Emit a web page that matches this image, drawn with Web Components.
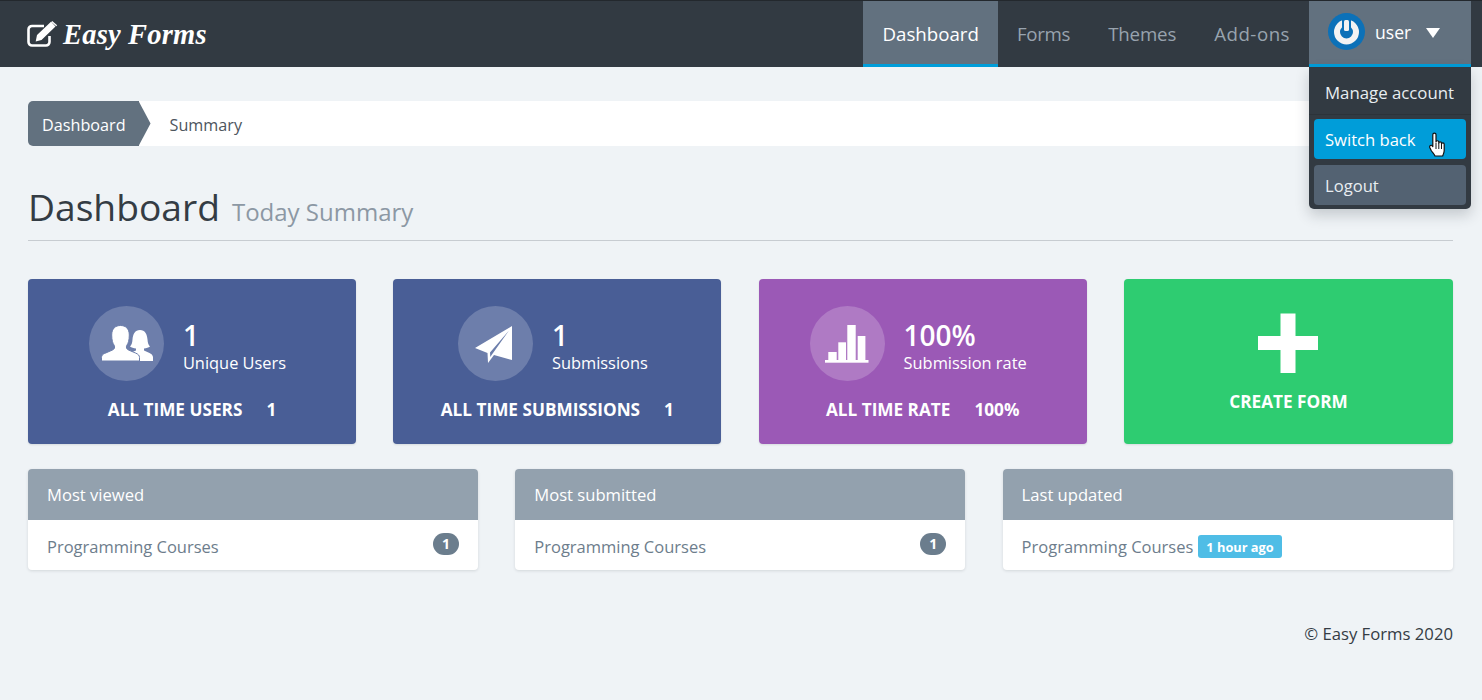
<!DOCTYPE html>
<html lang="en"><head><meta charset="utf-8"><title>Easy Forms</title>
<style>
html,body{margin:0;padding:0;background:#eff3f6;height:700px;overflow:hidden}
body{font-family:"Open Sans",sans-serif;font-size:17px;color:#343c44}
</style></head><body>
<ef-app></ef-app>
<script>
const def=(name,html,init)=>{customElements.define(name,class extends HTMLElement{
  connectedCallback(){ if(this.shadowRoot)return; const r=this.attachShadow({mode:'open'}); r.innerHTML=typeof html==='function'?html(this):html; init&&init(this,r);}
});};
const ICONS={
users:`<svg width="52" height="36" viewBox="0 0 52 36" style="margin-left:1px;margin-top:-1px"><path fill="#fff" d="M52 36v-4c-.3-2-1.700-3.300-3.500-4l-5.500-2.500v-2c2.500-.3 4.500-1 6-2-1.500-1.500-2.300-3.500-2.500-7C46 9 44 5 39 5s-7 4-7.500 9.500c-.2 3.500-1 5.500-2.500 7 1.500 1 3.500 1.700 6 2v2L29 28v8z"/><path fill="#fff" stroke="#6c7eab" stroke-width="1" d="M.5 36v-3.500c0-2 1-3.200 3-4l8-3.500c2-1 2.500-2.500 1.800-4.500C11.700 18.500 10.700 15 10.700 10 10.700 3.500 14.500.5 19.500.5S28.300 3.500 28.300 10c0 5-1 8.500-2.600 10.500-.7 2-.2 3.500 1.800 4.500l7 3c2.800 1.200 4 2.500 4 4.500V36z"/></svg>`,
plane:`<svg width="37" height="37" viewBox="0 0 37 37" style="margin-left:-3px;margin-top:1px"><path fill="#fff" d="M37 0 0 22l12.500 5L13 37l6-8 18 5z"/><path fill="#6c7eab" d="M34 4.500 15 26.500l.3 4.500 2.200-3.200z"/></svg>`,
bars:`<svg width="44" height="38" viewBox="0 0 44 38"><g fill="#fff"><rect x="3.300" y="27" width="8.400" height="8"/><rect x="13.300" y="17.300" width="7.700" height="18"/><rect x="22.300" y="0" width="8.400" height="35"/><rect x="32.700" y="11" width="7.700" height="24"/><rect x="0" y="35" width="43.500" height="2.700"/></g></svg>`
};

def('ef-nav-item',`<style>
:host{display:flex;align-items:center;height:66px;padding:0 19px 0;box-sizing:border-box;color:#98a3ae;font-size:18.700px;border-bottom:3px solid transparent;white-space:nowrap}
:host([active]){background:#62717f;color:#fff;border-bottom-color:#009dd9}
div{padding-top:2px}
</style><div><slot></slot></div>`);

def('ef-user-menu',`<style>
:host{display:block;position:relative;width:162px;height:66px;margin-right:11px}
.top{height:66px;box-sizing:border-box;background:#62717f;border-bottom:3px solid #009dd9;color:#fff;font-size:17.600px;display:flex;align-items:center;padding:0 0 0 19px;gap:9px}
.top span{margin-top:-1px}
.av{flex:none;margin-top:-1px}
.caret{width:0;height:0;border-left:7.500px solid transparent;border-right:7.500px solid transparent;border-top:10px solid #fff;margin:0 0 0 6px}
.menu{position:absolute;left:0;right:0;top:66px;background:#323a42;border-radius:0 0 5px 5px;box-shadow:0 6px 14px rgba(40,50,60,.22);padding:0 5px 3px;box-sizing:border-box;height:142px;z-index:5;font-size:16.600px}
.m{display:flex;align-items:center;padding:0 11px;box-sizing:border-box;height:40px;border-radius:4px;color:#e8edf1;white-space:nowrap}
.first{margin:0 -5px 4px;padding:4px 16px 0;border-bottom:1px solid #2c3339;height:48px;border-radius:0;font-size:16.800px}
.on{background:#009dd9;color:#fff;position:relative;margin-bottom:6px}
.off{background:#536272;color:#e8edf1}
.hand{position:absolute;left:115px;top:13px}
</style>
<div class="top"><svg class="av" width="38" height="38" viewBox="0 0 38 38"><circle cx="18.500" cy="18.500" r="18.500" fill="#0c71b8"/><circle cx="18.500" cy="19" r="9.500" fill="none" stroke="#f3f3f3" stroke-width="6"/><rect x="14" y="4" width="9" height="14" fill="#0c71b8"/><rect x="16" y="7" width="5" height="11" rx="1.500" fill="#f3f3f3"/></svg><span>user</span><i class="caret"></i></div>
<div class="menu"><div class="m first">Manage account</div><div class="m on">Switch back
<svg class="hand" width="17" height="26" viewBox="0 0 17 26"><path fill="#fff" stroke="#111" stroke-width="1.200" stroke-linejoin="round" d="M3.800 14.500V2.800c0-2.200 3.200-2.200 3.200 0V10c0-1.700 2.800-1.700 2.800 0v1c0-1.600 2.700-1.600 2.700 0v1c0-1.500 2.700-1.500 2.700.2v6.300c0 2.500-1 3.500-1.500 5.500H6c-.8-2-2.500-3.500-3.800-5.500L.8 15.500c-.7-1.800 1.500-3 2.300-1.700z"/><path stroke="#111" fill="none" d="M7 11v6M9.800 11v6M12.500 12v5"/></svg></div><div class="m off">Logout</div></div>`);

def('ef-navbar',`<style>
:host{display:flex;height:67px;box-sizing:border-box;background:#323a42;border-top:1px solid #23282d;align-items:stretch;position:relative;z-index:3}
.brand{display:flex;align-items:center;gap:5px;padding-left:27px;color:#fff;flex:1}
.name{font:italic 700 28.500px "Liberation Serif",serif;letter-spacing:.2px;padding-top:2px}
svg{flex:none}
</style>
<div class="brand"><svg width="31" height="27" viewBox="0 0 31 27"><path fill="none" stroke="#fff" stroke-width="2.600" d="M22.500 15v6a3.500 3.500 0 0 1-3.500 3.500H5A3.500 3.500 0 0 1 1.500 21V8.500A3.500 3.500 0 0 1 5 5h12"/><path fill="#fff" d="M10 14 24 .8l4.500 4.700L14.500 19l-5.800 1.500zM25.200 0l5 4.300-1 1-4.800-4.400z"/></svg><span class="name">Easy Forms</span></div>
<slot></slot>`);

def('ef-breadcrumb',`<style>
:host{display:flex;height:45px;background:#fff;border-radius:5px 0 0 5px;align-items:center;font-size:16.200px;color:#4d555d}
.a{position:relative;background:#62717f;color:#fff;height:45px;display:flex;align-items:center;padding:0 13px 0 14px;border-radius:5px 0 0 5px;margin-right:31px}
.a::after{content:"";position:absolute;left:100%;top:0;width:12px;height:45px;background:#62717f;clip-path:polygon(0 0,100% 50%,0 100%)}
.t{padding-top:2px}
</style><div class="a"><span class="t"><slot name="root"></slot></span></div><span class="t"><slot></slot></span>`);

def('ef-page-title',`<style>
:host{display:block;margin-top:39px;height:55px;border-bottom:1px solid #c7ccd1}
h1{margin:0;font-weight:400;font-size:37.200px;line-height:44px;color:#343c44;display:flex;align-items:baseline;gap:12px}
small{font-size:24px;color:#8c98a4}
</style><h1><slot></slot><small><slot name="sub"></slot></small></h1>`);

def('ef-stat-card',(el)=>`<style>
:host{display:flex;flex-direction:column;align-items:center;height:165px;box-sizing:border-box;background:${el.getAttribute('color')||'#495e96'};border-radius:4px;box-shadow:0 1px 2px rgba(40,50,60,.12);color:#fff;padding-top:27px}
.top{display:flex;align-items:center;gap:19px;height:75px;padding-right:9px}
.ic{width:75px;height:75px;border-radius:50%;background:rgba(255,255,255,.2);display:flex;align-items:center;justify-content:center}
.t{display:flex;flex-direction:column;padding-top:4px}
b{font-weight:600;font-size:28px;line-height:34px;height:34px;margin-top:1px}
span{font-size:16.400px;line-height:22px;height:22px}
.bot{display:flex;gap:24px;font-weight:700;font-size:17.200px;margin-top:17px;line-height:24px}
</style><div class="top"><div class="ic">${ICONS[el.getAttribute('icon')]}</div><div class="t"><b>${el.getAttribute('value')}</b><span>${el.getAttribute('label')}</span></div></div>
<div class="bot"><em style="all:unset">${el.getAttribute('total-label')}</em><em style="all:unset">${el.getAttribute('total')}</em></div>`);

def('ef-create-card',`<style>
:host{display:flex;flex-direction:column;align-items:center;height:165px;box-sizing:border-box;background:#2ecc71;border-radius:4px;box-shadow:0 1px 2px rgba(40,50,60,.12);color:#fff;padding-top:34px;font-weight:700;font-size:17.200px}
svg{display:block;margin-bottom:17px}
</style><svg width="60" height="60" viewBox="0 0 60 60"><path fill="#fff" d="M22.500 0h15v22.500H60v14H37.500V60h-15V36.500H0v-14h22.500z" transform="translate(0 .5)"/></svg><slot></slot>`);

def('ef-panel',`<style>
:host{display:block;background:#fff;border-radius:4px;box-shadow:0 1px 3px rgba(40,50,60,.14);overflow:hidden;height:101px}
.h{height:51px;background:#93a1ae;color:#fff;display:flex;align-items:center;padding:0 19px;font-size:16.600px;box-sizing:border-box}
.b{height:50px;display:flex;align-items:center;padding:2px 19px 0;color:#6d7d8c;font-size:16.500px;gap:5px;box-sizing:border-box}
::slotted(ef-badge){margin-left:auto;margin-right:0}
</style><div class="h"><slot name="head"></slot></div><div class="b"><slot></slot></div>`);

def('ef-badge',`<style>
:host{display:inline-flex;align-items:center;justify-content:center;width:26px;height:22px;border-radius:11px;background:#6b7d8d;color:#fff;font-weight:700;font-size:14px;margin-top:-5px}
</style><slot></slot>`);

def('ef-label',`<style>
:host{display:inline-flex;align-items:center;height:23px;padding:0 8px;border-radius:3px;background:#4fbde6;color:#fff;font-weight:700;font-size:12.800px;margin-top:1px}
</style><slot></slot>`);

def('ef-app',`<style>
:host{display:block}
main{display:block;padding:34px 29px 0 28px}
.cards{display:grid;grid-template-columns:328px 328px 328px 329px;column-gap:37.330px;margin-top:38px}
.panels{display:grid;grid-template-columns:450px 450px 450px;column-gap:37.300px;margin-top:25px}
footer{text-align:right;font-size:16.700px;margin-top:52px;line-height:24px;color:#343c44}
</style>
<ef-navbar><ef-nav-item active>Dashboard</ef-nav-item><ef-nav-item style="letter-spacing:-.3px">Forms</ef-nav-item><ef-nav-item style="letter-spacing:-.15px">Themes</ef-nav-item><ef-nav-item style="letter-spacing:.5px">Add-ons</ef-nav-item><ef-user-menu></ef-user-menu></ef-navbar>
<main>
<ef-breadcrumb><span slot="root">Dashboard</span>Summary</ef-breadcrumb>
<ef-page-title>Dashboard<span slot="sub">Today Summary</span></ef-page-title>
<section class="cards">
<ef-stat-card icon="users" value="1" label="Unique Users" total-label="ALL TIME USERS" total="1"></ef-stat-card>
<ef-stat-card icon="plane" value="1" label="Submissions" total-label="ALL TIME SUBMISSIONS" total="1"></ef-stat-card>
<ef-stat-card icon="bars" color="#9b59b6" value="100%" label="Submission rate" total-label="ALL TIME RATE" total="100%"></ef-stat-card>
<ef-create-card>CREATE FORM</ef-create-card>
</section>
<section class="panels">
<ef-panel><span slot="head">Most viewed</span>Programming Courses<ef-badge>1</ef-badge></ef-panel>
<ef-panel><span slot="head">Most submitted</span>Programming Courses<ef-badge>1</ef-badge></ef-panel>
<ef-panel><span slot="head">Last updated</span>Programming Courses<ef-label>1 hour ago</ef-label></ef-panel>
</section>
<footer>© Easy Forms 2020</footer>
</main>`);
</script>
</body></html>
